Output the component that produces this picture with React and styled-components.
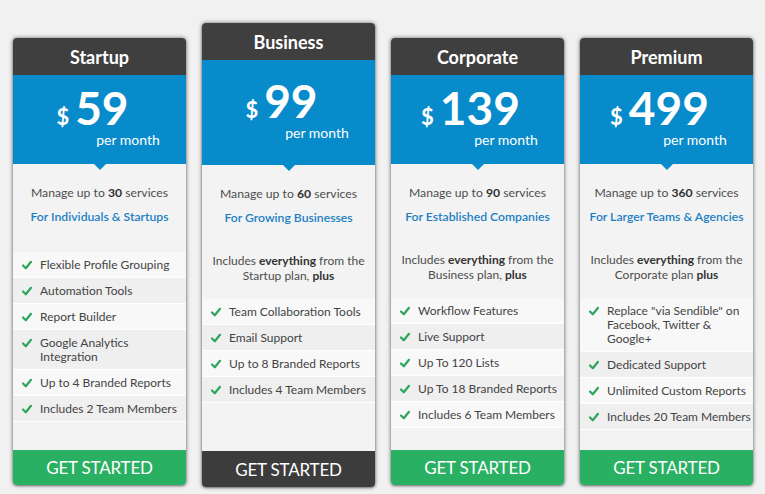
import React from "react";
import styled, { createGlobalStyle } from "styled-components";

const GlobalStyle = createGlobalStyle`
  html, body {
    margin: 0;
    padding: 0;
    background: #f1f1f1;
    font-family: Lato, "Open Sans", sans-serif;
  }
`;

const Page = styled.div`
  width: 765px;
  height: 494px;
  display: flex;
  align-items: flex-start;
  gap: 16px;
  padding: 23px 0 0 13px;
  box-sizing: border-box;
  overflow: hidden;
`;

const Card = styled.div`
  width: 173px;
  height: ${(p) => (p.featured ? 464 : 447)}px;
  margin-top: ${(p) => (p.featured ? 0 : 15)}px;
  display: flex;
  flex-direction: column;
  background: #f3f3f3;
  border-radius: 4px;
  overflow: hidden;
  box-shadow: 0 0 4px rgba(0, 0, 0, 0.55), 0 1px 2px rgba(0, 0, 0, 0.3);
`;

const Title = styled.div`
  height: 37px;
  background: #3f3f3f;
  color: #fff;
  font-size: 18px;
  font-weight: 700;
  display: flex;
  align-items: center;
  justify-content: center;
`;

const PriceBox = styled.div`
  position: relative;
  height: ${(p) => (p.featured ? 105 : 89)}px;
  background: #088bca;
  color: #fff;
  display: flex;
  flex-direction: column;
  align-items: center;
  justify-content: center;

  &::after {
    content: "";
    position: absolute;
    left: 50%;
    bottom: -6px;
    margin-left: -6px;
    border-left: 6px solid transparent;
    border-right: 6px solid transparent;
    border-top: 6px solid #088bca;
  }
`;

const PriceLine = styled.div`
  display: flex;
  align-items: baseline;
  gap: 6px;
  padding-right: 14px;
  line-height: 30px;
`;

const Dollar = styled.span`
  font-size: 22px;
  font-weight: 700;
`;

const Amount = styled.span`
  font-size: 46px;
  font-weight: 700;
`;

const PerMonth = styled.div`
  font-size: 14px;
  line-height: 14px;
  padding-left: 57px;
  margin-top: 1px;
`;

const Body = styled.div`
  flex: 1;
  display: flex;
  flex-direction: column;
`;

const Intro = styled.div`
  padding: 21px 4px 27px;
  text-align: center;
  font-size: 12.2px;
  line-height: 16px;
`;

const Manage = styled.div`
  color: #4d4d4d;
  b {
    color: #333;
  }
`;

const Audience = styled.div`
  margin-top: 8px;
  color: #1b7fc4;
  font-weight: 600;
`;

const Includes = styled.div`
  padding: 0 4px 16px;
  text-align: center;
  font-size: 12px;
  line-height: 15px;
  color: #4d4d4d;
  b {
    color: #333;
  }
`;

const List = styled.ul`
  list-style: none;
  margin: 0;
  padding: 0;
`;

const Item = styled.li`
  display: flex;
  align-items: flex-start;
  gap: 8px;
  padding: 6px 1px 5px 9px;
  font-size: 12px;
  line-height: 14px;
  color: #444;
  background: ${(p) => (p.alt ? "#efefef" : "#f8f8f8")};
  border-bottom: 1px solid #fff;
`;

const Check = styled.svg`
  flex: none;
  width: 10px;
  height: 10px;
  margin-top: 2px;
`;

const Button = styled.div`
  height: ${(p) => (p.featured ? 36 : 35)}px;
  background: ${(p) => (p.featured ? "#3c3c3c" : "#29b062")};
  color: #fff;
  font-size: 17px;
  display: flex;
  align-items: center;
  justify-content: center;
  letter-spacing: -0.2px;
`;

const plans = [
  {
    name: "Startup",
    price: "59",
    services: "30",
    audience: "For Individuals & Startups",
    features: [
      "Flexible Profile Grouping",
      "Automation Tools",
      "Report Builder",
      "Google Analytics Integration",
      "Up to 4 Branded Reports",
      "Includes 2 Team Members",
    ],
  },
  {
    name: "Business",
    price: "99",
    services: "60",
    audience: "For Growing Businesses",
    featured: true,
    from: "Startup",
    comma: true,
    features: [
      "Team Collaboration Tools",
      "Email Support",
      "Up to 8 Branded Reports",
      "Includes 4 Team Members",
    ],
  },
  {
    name: "Corporate",
    price: "139",
    services: "90",
    audience: "For Established Companies",
    from: "Business",
    comma: true,
    features: [
      "Workflow Features",
      "Live Support",
      "Up To 120 Lists",
      "Up To 18 Branded Reports",
      "Includes 6 Team Members",
    ],
  },
  {
    name: "Premium",
    price: "499",
    services: "360",
    audience: "For Larger Teams & Agencies",
    from: "Corporate",
    features: [
      'Replace "via Sendible" on Facebook, Twitter & Google+',
      "Dedicated Support",
      "Unlimited Custom Reports",
      "Includes 20 Team Members",
    ],
  },
];

const CheckIcon = () => (
  <Check viewBox="0 0 10 10">
    <path d="M1 5.5 L3.8 8.3 L9 1.8" fill="none" stroke="#2ea55c" strokeWidth="2.2" strokeLinecap="round" strokeLinejoin="round" />
  </Check>
);

const PlanCard = ({ plan }) => (
  <Card featured={plan.featured}>
    <Title>{plan.name}</Title>
    <PriceBox featured={plan.featured}>
      <PriceLine>
        <Dollar>$</Dollar>
        <Amount>{plan.price}</Amount>
      </PriceLine>
      <PerMonth>per month</PerMonth>
    </PriceBox>
    <Body>
      <Intro>
        <Manage>
          Manage up to <b>{plan.services}</b> services
        </Manage>
        <Audience>{plan.audience}</Audience>
      </Intro>
      {plan.from && (
        <Includes>
          Includes <b>everything</b> from the {plan.from} plan{plan.comma ? "," : ""} <b>plus</b>
        </Includes>
      )}
      <List>
        {plan.features.map((f, i) => (
          <Item key={f} alt={i % 2 === 1}>
            <CheckIcon />
            <span>{f}</span>
          </Item>
        ))}
      </List>
    </Body>
    <Button featured={plan.featured}>GET STARTED</Button>
  </Card>
);

export default function App() {
  return (
    <>
      <GlobalStyle />
      <Page>
        {plans.map((p) => (
          <PlanCard key={p.name} plan={p} />
        ))}
      </Page>
    </>
  );
}
